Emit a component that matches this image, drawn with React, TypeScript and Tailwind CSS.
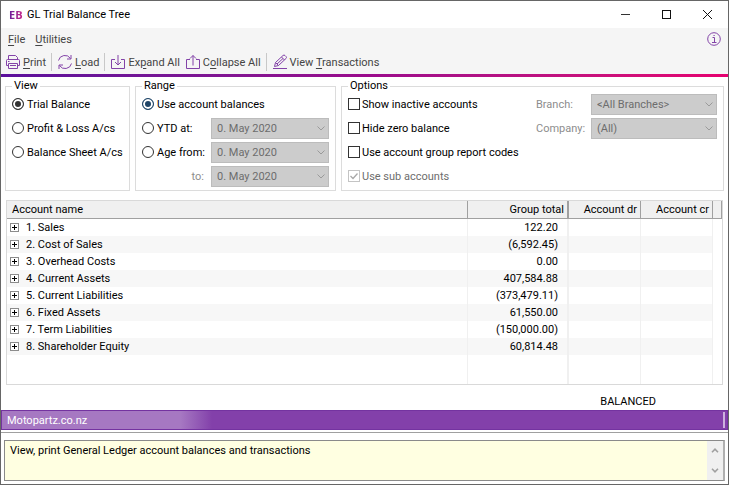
import type { ReactNode } from 'react';

const accounts = [
  { name: '1. Sales', total: '122.20' },
  { name: '2. Cost of Sales', total: '(6,592.45)' },
  { name: '3. Overhead Costs', total: '0.00' },
  { name: '4. Current Assets', total: '407,584.88' },
  { name: '5. Current Liabilities', total: '(373,479.11)' },
  { name: '6. Fixed Assets', total: '61,550.00' },
  { name: '7. Term Liabilities', total: '(150,000.00)' },
  { name: '8. Shareholder Equity', total: '60,814.48' },
];

// "_" marks the access key, e.g. "_File"
function AccessLabel({ text }: { text: string }) {
  const i = text.indexOf('_');
  return (
    <span className="whitespace-pre">
      {text.slice(0, i)}
      <span className="underline underline-offset-2">{text[i + 1]}</span>
      {text.slice(i + 2)}
    </span>
  );
}

function Icon({ children }: { children: ReactNode }) {
  return (
    <svg width="16" height="16" viewBox="0 0 16 16" fill="none" stroke="#8343a8" strokeWidth="1" className="shrink-0">
      {children}
    </svg>
  );
}

function ToolButton({ label, children }: { label: string; children: ReactNode }) {
  return (
    <button type="button" className="flex items-center gap-0.5">
      <Icon>{children}</Icon>
      <AccessLabel text={label} />
    </button>
  );
}

function Separator() {
  return <div className="h-[18px] w-px bg-[#c8c8c8]" />;
}

function Group({ title, className, children }: { title: string; className: string; children: ReactNode }) {
  return (
    <fieldset className={`min-w-0 border border-[#dcdcdc] px-1.5 pb-1 ${className}`}>
      <legend className="px-0.5 leading-4">{title}</legend>
      {children}
    </fieldset>
  );
}

function Radio({ name, label, checked, blue }: { name: string; label: string; checked?: boolean; blue?: boolean }) {
  return (
    <label className="flex h-5 items-center gap-[3px] whitespace-nowrap">
      <input
        type="radio"
        name={name}
        defaultChecked={checked}
        className={`size-3 shrink-0 appearance-none rounded-full border bg-white checked:shadow-[inset_0_0_0_2px_white] ${
          blue ? 'border-[#1f4568] checked:bg-[#1f4568]' : 'border-[#333] checked:bg-[#333]'
        }`}
      />
      {label}
    </label>
  );
}

function Check({ label, checked, disabled }: { label: string; checked?: boolean; disabled?: boolean }) {
  return (
    <label className={`flex h-5 items-center gap-0.5 whitespace-nowrap ${disabled ? 'text-[#6d6d6d]' : ''}`}>
      <span className="relative flex">
        <input
          type="checkbox"
          defaultChecked={checked}
          disabled={disabled}
          className="size-3 appearance-none border border-[#333] bg-white disabled:border-[#c4c4c4]"
        />
        {checked && (
          <svg viewBox="0 0 12 12" className="pointer-events-none absolute inset-0 size-3" fill="none" stroke="#a8a8a8" strokeWidth="1.3">
            <path d="M2.5 6l2.5 2.5 4.5-5" />
          </svg>
        )}
      </span>
      {label}
    </label>
  );
}

function Combo({ id, label, value, className }: { id: string; label: string; value: string; className: string }) {
  return (
    <div className={`relative ${className}`}>
      <select
        id={id}
        aria-label={label}
        disabled
        className="block h-[21px] w-full appearance-none border border-[#bcbcbc] bg-[#cccccc] pt-px pl-[5px] text-[#6d6d6d] opacity-100"
      >
        <option>{value}</option>
      </select>
      <svg viewBox="0 0 8 5" className="pointer-events-none absolute top-2 right-1 h-[5px] w-2" fill="none" stroke="#9a9a9a">
        <path d="M0.5 0.5l3.5 3.5 3.5-3.5" />
      </svg>
    </div>
  );
}

function Expander() {
  return (
    <button type="button" aria-label="+" className="block">
      <svg width="9" height="9" viewBox="0 0 9 9" fill="none" stroke="#8c8c8c" className="block">
        <rect x="0.5" y="0.5" width="8" height="8" fill="#fff" />
        <path d="M2 4.5h5M4.5 2v5" stroke="#000" />
      </svg>
    </button>
  );
}

export default function App() {
  return (
    <div className="flex min-h-screen flex-col border border-[#666] bg-white font-['Roboto','Open_Sans',sans-serif] text-[11px] leading-[17px] text-black">
      {/* Title bar */}
      <header className="flex h-[27px] items-center pl-2">
        <span className="w-[18px] bg-linear-to-r from-[#6a1b9a] to-[#e6007e] bg-clip-text font-['Open_Sans'] font-bold text-transparent">EB</span>
        <h1 className="flex-1">GL Trial Balance Tree</h1>
        <div className="flex items-center">
          <button type="button" aria-label="Minimize" className="flex w-[41px] justify-center">
            <svg width="11" height="11" viewBox="0 0 11 11" stroke="#333"><path d="M1 5.5h9" /></svg>
          </button>
          <button type="button" aria-label="Maximize" className="flex w-[41px] justify-center">
            <svg width="11" height="11" viewBox="0 0 11 11" stroke="#111" fill="none"><rect x="1.5" y="1.5" width="8" height="8" /></svg>
          </button>
          <button type="button" aria-label="Close" className="flex w-[41px] justify-center">
            <svg width="11" height="11" viewBox="0 0 11 11" stroke="#111"><path d="M1 1l9 9M10 1l-9 9" /></svg>
          </button>
        </div>
      </header>

      {/* Menu and toolbar */}
      <div className="bg-[#f5f5f5] text-[#444]">
        <nav className="flex h-[22px] items-center gap-[10px] px-[7px]">
          <button type="button"><AccessLabel text="_File" /></button>
          <button type="button"><AccessLabel text="_Utilities" /></button>
          <button type="button" aria-label="Information" className="ml-auto">
            <svg width="14" height="14" viewBox="0 0 14 14" fill="none" stroke="#8343a8" className="block">
              <circle cx="7" cy="7" r="6.3" />
              <path d="M5.5 5.5h2v5M5 10.5h4.5M6.5 3.5h1.2" />
            </svg>
          </button>
        </nav>
        <div className="flex h-6 items-center gap-[5px] px-1">
          <ToolButton label="_Print">
            <path d="M3.5 5.5v-4h7l2 2v2M3 11.5H1.5v-5q0-1 1-1h11q1 0 1 1v5H13" />
            <path d="M3.5 9.5h9v5h-9zM5 11.5h6M3 7.5h1.5" />
          </ToolButton>
          <Separator />
          <ToolButton label="_Load">
            <path d="M1.5 6.5a6.6 6.6 0 0 1 12-2M14 1v4h-4M14.5 9.5a6.6 6.6 0 0 1-12 2M2 15v-4h4" />
          </ToolButton>
          <Separator />
          <ToolButton label="Ex_pand All">
            <path d="M5 5.5H1.5v9h13v-9H11M8 1v10M5 8l3 3 3-3" />
          </ToolButton>
          <ToolButton label="C_ollapse All">
            <path d="M5 5.5H1.5v9h13v-9H11M8 11.5v-10M5 4.5l3-3 3 3" />
          </ToolButton>
          <Separator />
          <ToolButton label="View _Transactions">
            <path d="M1 14.5h14" />
            <path d="M2.5 12.5l1-4 7.5-7q1-1 2 0l1 1q1 1 0 2l-7.5 7zM3.5 8.5l3 3M9.5 3l3 3M5 10l6-5.5" />
          </ToolButton>
        </div>
      </div>
      <div className="h-[3px] bg-linear-to-r from-[#5b0f9c] via-[#9a0a8c] to-[#e6006f]" />

      <main className="flex flex-1 flex-col">
        {/* Report settings */}
        <div className="flex gap-[5px] px-1 pt-px">
          <Group title="View" className="w-[125px]">
            <div className="flex flex-col gap-1">
              <Radio name="view" label="Trial Balance" checked />
              <Radio name="view" label="Profit & Loss A/cs" />
              <Radio name="view" label="Balance Sheet A/cs" />
            </div>
          </Group>
          <Group title="Range" className="w-[201px]">
            <div className="flex flex-col gap-1">
              <Radio name="range" label="Use account balances" checked blue />
              <div className="flex h-5 items-center justify-between">
                <Radio name="range" label="YTD at:" />
                <Combo id="ytd" label="YTD at" value="0. May 2020" className="w-[118px]" />
              </div>
              <div className="flex h-5 items-center justify-between">
                <Radio name="range" label="Age from:" />
                <Combo id="age-from" label="Age from" value="0. May 2020" className="w-[118px]" />
              </div>
              <div className="flex h-5 items-center justify-end gap-[7px]">
                <label htmlFor="age-to" className="text-[#8d8d8d]">to:</label>
                <Combo id="age-to" label="to" value="0. May 2020" className="w-[118px]" />
              </div>
            </div>
          </Group>
          <Group title="Options" className="flex-1">
            <div className="flex justify-between">
              <div className="flex flex-col gap-1">
                <Check label="Show inactive accounts" />
                <Check label="Hide zero balance" />
                <Check label="Use account group report codes" />
                <Check label="Use sub accounts" checked disabled />
              </div>
              <div className="flex flex-col gap-1">
                <div className="flex h-5 items-center">
                  <label htmlFor="branch" className="w-[55px] text-[#8d8d8d]">Branch:</label>
                  <Combo id="branch" label="Branch" value="<All Branches>" className="w-[126px]" />
                </div>
                <div className="flex h-5 items-center">
                  <label htmlFor="company" className="w-[55px] text-[#8d8d8d]">Company:</label>
                  <Combo id="company" label="Company" value="(All)" className="w-[126px]" />
                </div>
              </div>
            </div>
          </Group>
        </div>

        {/* Account tree */}
        <div className="mx-[5px] mt-[9px] flex flex-1 border border-[#d9d9d9]">
          <table className="w-full table-fixed border-separate border-spacing-0">
            <colgroup>
              <col />
              <col className="w-[100px]" />
              <col className="w-[73px]" />
              <col className="w-[72px]" />
              <col className="w-[9px]" />
            </colgroup>
            <thead>
              <tr className="bg-[#f0f0f0] *:border-b *:border-[#a0a0a0] *:p-0 *:font-normal">
                <th className="border-r text-left"><span className="pl-[5px]">Account name</span></th>
                <th className="border-r text-right"><span className="pr-[3px]">Group total</span></th>
                <th className="border-r border-l text-right"><span className="pr-[3px]">Account dr</span></th>
                <th className="border-r text-right"><span className="pr-[3px]">Account cr</span></th>
                <th className="border-r" />
              </tr>
            </thead>
            <tbody>
              {accounts.map((account) => (
                <tr key={account.name} className="h-[17px] *:border-[#f0f0f0] *:p-0 even:bg-[#f7f7f7]">
                  <td className="border-r">
                    <div className="flex items-center gap-[7px] pl-[3px]">
                      <Expander />
                      <span>{account.name}</span>
                    </div>
                  </td>
                  <td className="border-r text-right"><span className="pr-[9px]">{account.total}</span></td>
                  <td className="border-r border-l" />
                  <td className="border-r" />
                  <td className="bg-white" />
                </tr>
              ))}
              <tr className="*:border-[#f0f0f0] *:p-0">
                <td className="border-r" />
                <td className="border-r" />
                <td className="border-r border-l" />
                <td className="border-r" />
                <td />
              </tr>
            </tbody>
          </table>
        </div>
        <p className="flex h-[25px] items-center justify-end pt-2 pr-[72px]">BALANCED</p>
      </main>

      {/* Company bar */}
      <div className="flex h-5 items-center justify-between border border-[#7433a0] bg-[#8340aa] pr-0.5">
        <div className="w-[210px] bg-linear-to-r from-[#a678c2] from-85% to-[#8340aa] pt-px pl-[5px] text-white">Motopartz.co.nz</div>
        <div className="h-4 w-0.5 bg-[#cdb0de]" />
      </div>
      <div className="mt-px mb-[7px] h-0.5 border-b border-[#a0a0a0]" />

      {/* Hint */}
      <div className="mx-[3px] mb-[3px] flex h-[41px] border border-[#8a8a8a] border-r-2 border-r-[#b0b0b0] bg-[#ffffe1]">
        <textarea
          aria-label="Hint"
          readOnly
          defaultValue="View, print General Ledger account balances and transactions"
          className="block flex-1 resize-none overflow-hidden bg-transparent px-[5px] py-px outline-none"
        />
        <div className="flex w-4 flex-col items-center justify-between bg-[#f0f0f0] py-[7px]">
          <svg width="8" height="5" viewBox="0 0 8 5" fill="none" stroke="#a0a0a0" strokeWidth="1.6"><path d="M1 4.2l3-3 3 3" /></svg>
          <svg width="8" height="5" viewBox="0 0 8 5" fill="none" stroke="#a0a0a0" strokeWidth="1.6"><path d="M1 0.8l3 3 3-3" /></svg>
        </div>
      </div>
    </div>
  );
}
